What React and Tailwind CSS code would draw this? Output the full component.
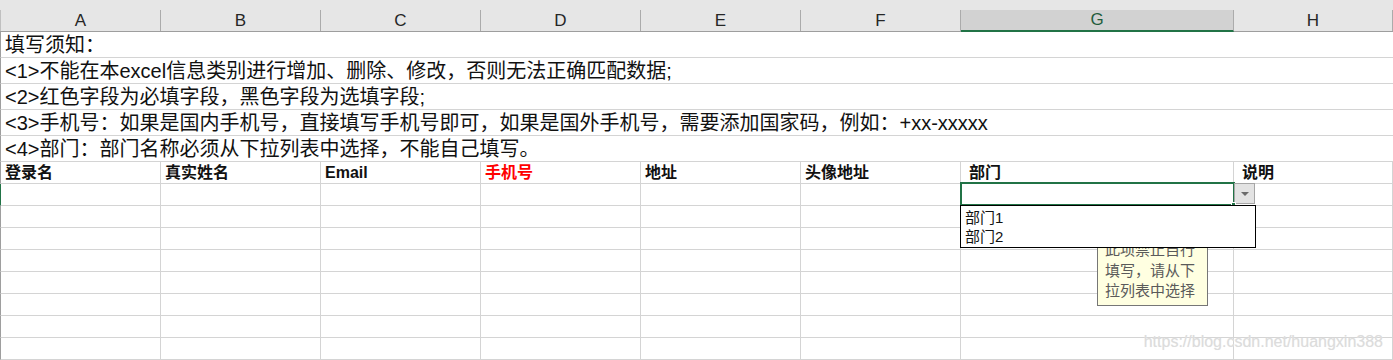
import React from "react";

const cols = [
    { key: "A", w: "w-[160px]" },
    { key: "B", w: "w-[160px]" },
    { key: "C", w: "w-[160px]" },
    { key: "D", w: "w-[160px]" },
    { key: "E", w: "w-[160px]" },
    { key: "F", w: "w-[160px]" },
    { key: "G", w: "w-[273px]" },
    { key: "H", w: "w-[159px]" },
];

const notes = [
    "填写须知：",
    "<1>不能在本excel信息类别进行增加、删除、修改，否则无法正确匹配数据;",
    "<2>红色字段为必填字段，黑色字段为选填字段;",
    "<3>手机号：如果是国内手机号，直接填写手机号即可，如果是国外手机号，需要添加国家码，例如：+xx-xxxxx",
    "<4>部门：部门名称必须从下拉列表中选择，不能自己填写。",
];

const fields = [
    { label: "登录名" },
    { label: "真实姓名" },
    { label: "Email" },
    { label: "手机号", red: true },
    { label: "地址" },
    { label: "头像地址" },
    { label: "部门", pad: true },
    { label: "说明", pad: true },
];

const font = "font-['Liberation_Sans','Noto_Sans_CJK_SC',sans-serif]";

function DeptDropdown() {
    return (
        <>
            {/* active cell */}
            <div className="absolute -left-px -top-[2px] w-[275px] h-[24px] border-2 border-[#217346] z-10" />
            <div className="absolute left-[270px] top-[18px] w-[5px] h-[5px] bg-[#217346] border border-white z-20" />

            {/* dropdown arrow */}
            <div className="absolute left-[273px] -top-px w-[21px] h-[21px] bg-[#e3e3e3] border border-[#a6a6a6] flex items-center justify-center z-10">
                <div className="w-0 h-0 border-l-[4px] border-r-[4px] border-t-[4px] border-l-transparent border-r-transparent border-t-[#6b6b6b]" />
            </div>

            {/* input message */}
            <div className="absolute left-[136px] top-[52px] w-[111px] h-[70px] bg-[#ffffe1] border border-[#767676] pt-[3px] pl-[7px] text-[15px] leading-[20.5px] text-[#5a5a5a] z-20">
                <div>此项禁止自行</div>
                <div>填写，请从下</div>
                <div>拉列表中选择</div>
            </div>

            {/* list */}
            <div className="absolute -left-px top-[21px] w-[296px] h-[43px] bg-white border border-black pt-[2px] text-[15px] leading-[19px] text-[#111] z-30">
                <div className="pl-[4px]">部门1</div>
                <div className="pl-[4px]">部门2</div>
            </div>
        </>
    );
}

export default function App() {
    return (
        <div className={`relative w-[1393px] h-[360px] overflow-hidden bg-white ${font}`}>
            {/* column letters */}
            <div className="h-[32px] pt-[10px] bg-[#e6e6e6] border-b border-[#9e9e9e] flex">
                <div className="w-px h-[21px] bg-[#c0c0c0]" />
                {cols.map(c => (
                    <div
                        key={c.key}
                        className={`${c.w} h-[21px] flex items-center justify-center text-[17px] border-r ${c.key === "G"
                            ? "bg-[#d2d2d2] border-[#ababab] text-[#1f5c3c] border-b-2 border-b-[#217346] -mb-px h-[22px] pb-[1px]"
                            : "border-[#ababab] text-[#262626]"}`}
                    >
                        {c.key}
                    </div>
                ))}
            </div>

            {/* merged instruction rows */}
            {notes.map((text, i) => (
                <div
                    key={i}
                    className="h-[26px] border-b border-l border-b-[#d4d4d4] border-l-[#9e9e9e] pl-[4px] flex items-center text-[20px] text-[#111] whitespace-nowrap"
                >
                    {text}
                </div>
            ))}

            {/* field header row */}
            <div className="h-[22px] flex border-b border-l border-b-[#d4d4d4] border-l-[#9e9e9e]">
                {fields.map((f, i) => (
                    <div
                        key={i}
                        className={`${cols[i].w} border-r border-[#d4d4d4] flex items-center font-bold text-[16px] ${f.pad ? "pl-[8px]" : "pl-[4px]"} ${f.red ? "text-[#ff0000]" : "text-[#111]"}`}
                    >
                        {f.label}
                    </div>
                ))}
            </div>

            {/* empty rows */}
            {Array.from({ length: 8 }).map((_, r) => (
                <div
                    key={r}
                    className={`h-[22px] flex border-b border-l border-b-[#d4d4d4] ${r === 0 ? "border-l-[#217346]" : "border-l-[#9e9e9e]"}`}
                >
                    {cols.map(c => (
                        <div key={c.key} className={`${c.w} relative border-r border-[#d4d4d4]`}>
                            {r === 0 && c.key === "G" && <DeptDropdown />}
                        </div>
                    ))}
                </div>
            ))}

            {/* watermark */}
            <div className="absolute right-[10px] top-[330px] text-[16px] text-[#dcdcdc] [text-shadow:0_0_1px_#eeeeee] z-40">
                https://blog.csdn.net/huangxin388
            </div>
        </div>
    );
}
